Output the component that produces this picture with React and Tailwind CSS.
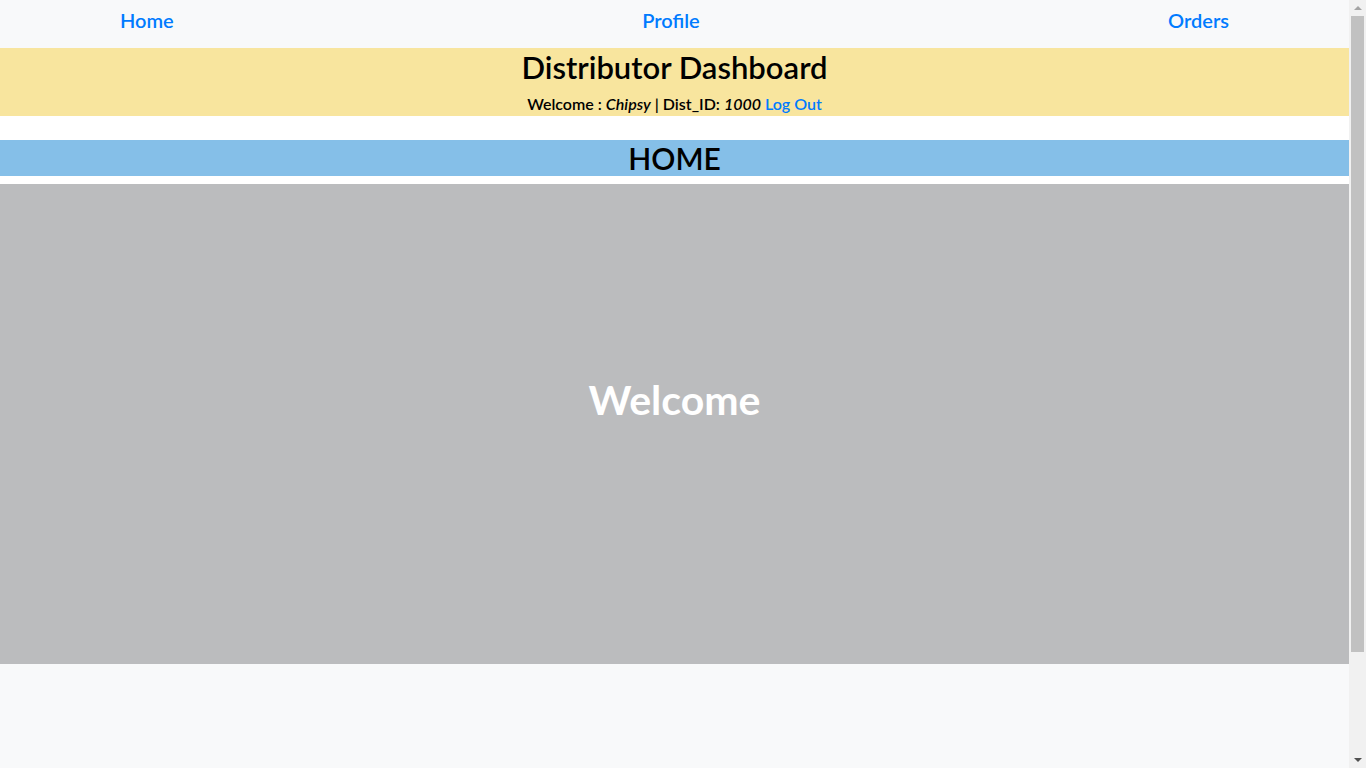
import React from 'react';

const NavBar = () => {
  return (
    <nav className="h-12 bg-[#f8f9fa] flex items-center justify-between px-[120px] pb-2">
      <a href="#" className="text-[20px] font-semibold text-[#007bff] leading-none">Home</a>
      <a href="#" className="text-[20px] font-semibold text-[#007bff] leading-none">Profile</a>
      <a href="#" className="text-[20px] font-semibold text-[#007bff] leading-none">Orders</a>
    </nav>
  );
};

// stands in for the browser's classic scrollbar seen in the screenshot
const ScrollBar = () => {
  return (
    <div className="w-[17px] shrink-0 bg-[#f1f1f1] flex flex-col">
      <div className="h-4 flex items-center justify-center">
        <div className="w-0 h-0 border-l-4 border-r-4 border-b-4 border-l-transparent border-r-transparent border-b-[#a3a3a3]" />
      </div>
      <div className="h-[636px] mx-[2px] bg-[#c1c1c1]" />
      <div className="flex-1" />
      <div className="h-4 flex items-center justify-center">
        <div className="w-0 h-0 border-l-4 border-r-4 border-t-4 border-l-transparent border-r-transparent border-t-[#505050]" />
      </div>
    </div>
  );
};

const App = () => {
  return (
    <div className="h-screen flex overflow-hidden bg-[#f8f9fa]">
      <div className="flex-1 min-w-0 font-['Lato','Liberation_Sans',sans-serif] text-black">
        <NavBar />

        <div className="bg-white">
          {/* header */}
          <header className="h-[68px] bg-[#f8e59e] flex flex-col items-center">
            <h2 className="text-[31px] font-semibold leading-none mt-[4px]">Distributor Dashboard</h2>
            <p className="text-[16px] font-semibold leading-none mt-[13px]">
              Welcome : <i>Chipsy</i> | Dist_ID: <i>1000</i>{' '}
              <a href="#" className="text-[#007bff]">Log Out</a>
            </p>
          </header>

          <div className="pt-6 pb-2">
            <div className="h-9 bg-[#85bfe8] flex items-center justify-center">
              <h3 className="text-[30px] font-semibold leading-none">HOME</h3>
            </div>
          </div>
        </div>

        <section className="h-[480px] bg-[#bbbcbe] flex justify-center pt-[195px]">
          <h1 className="text-[41px] font-bold text-white leading-none">Welcome</h1>
        </section>
      </div>
      <ScrollBar />
    </div>
  );
};

export default App;
